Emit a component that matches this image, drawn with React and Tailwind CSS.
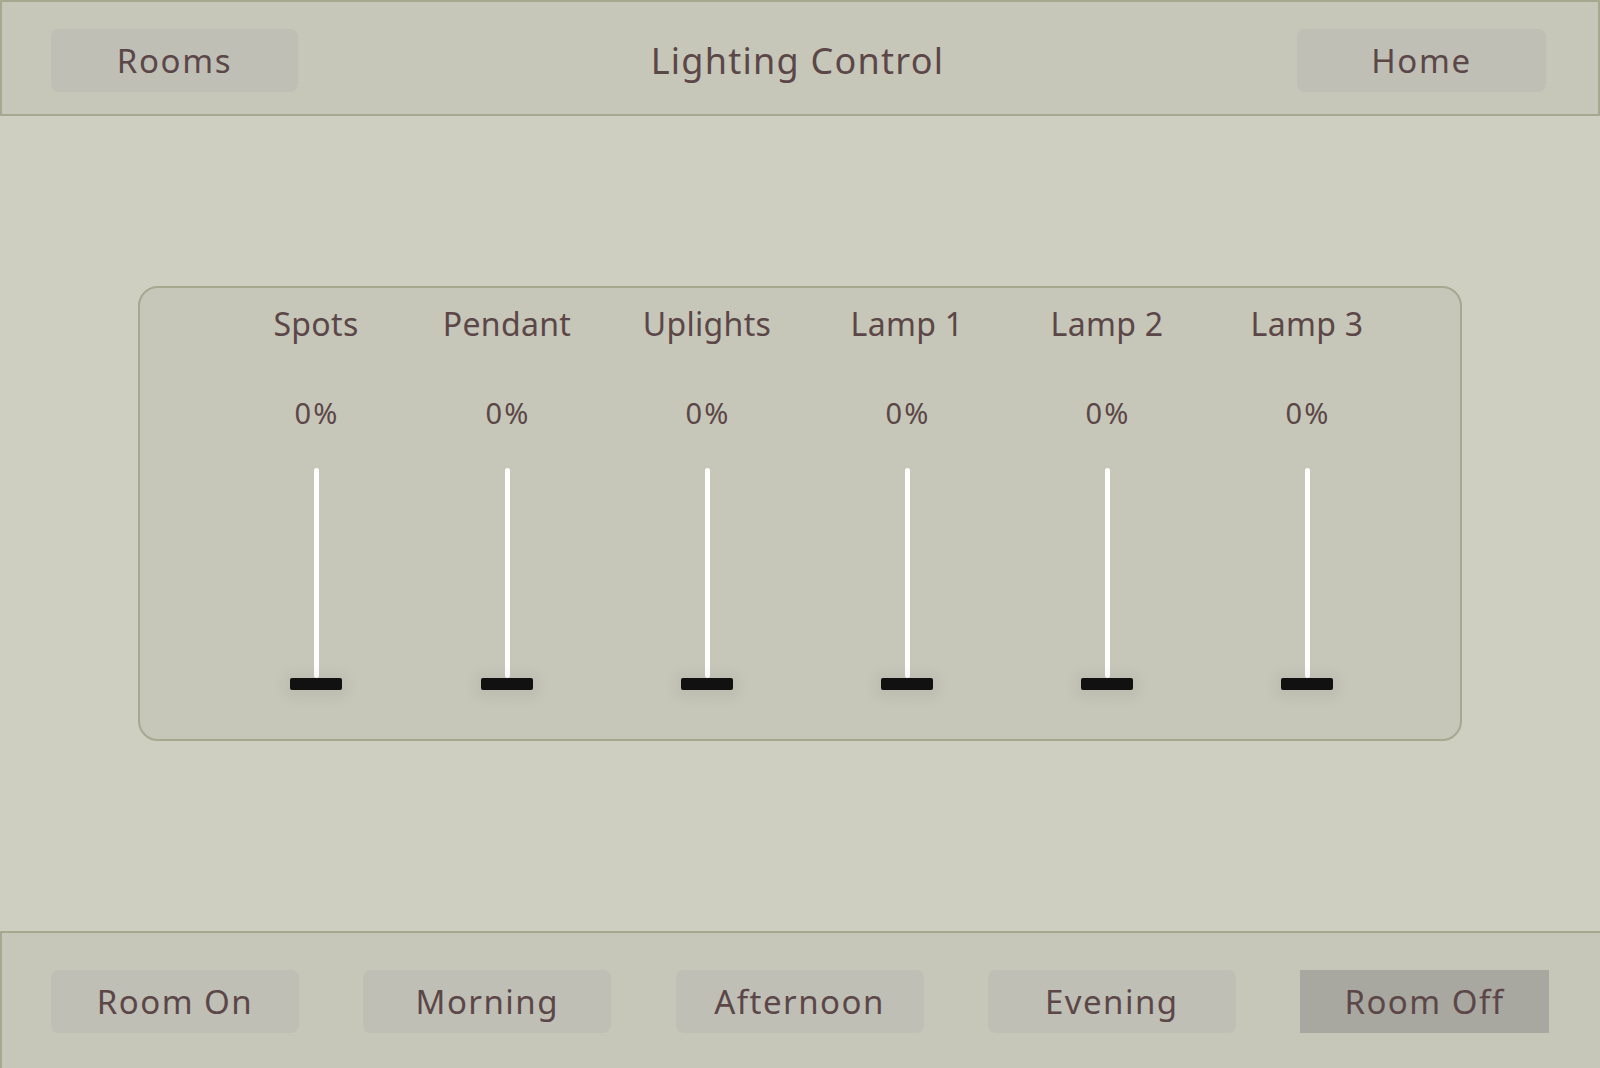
import React from "react";

const channels = [
  { name: "Spots", level: 0, width: "w-[182px]" },
  { name: "Pendant", level: 0, width: "w-[200px]" },
  { name: "Uplights", level: 0, width: "w-[200px]" },
  { name: "Lamp 1", level: 0, width: "w-[200px]" },
  { name: "Lamp 2", level: 0, width: "w-[200px]" },
  { name: "Lamp 3", level: 0, width: "w-[200px]" },
];

const scenes = ["Room On", "Morning", "Afternoon", "Evening", "Room Off"];

function Fader({ name, level, width }) {
  return (
    <div className={`${width} flex flex-col items-center`}>
      <div className="text-[32px] leading-[38px] tracking-[0.01em]">{name}</div>
      <div className="mt-[53px] pl-[2px] text-[29px] leading-[34px] tracking-[0.07em]">{level}%</div>
      <div className="mt-[38px] flex flex-col items-center">
        <div className="h-[210px] w-[5px] rounded-full bg-white" />
        <div className="h-[12px] w-[52px] rounded-[2px] bg-[#111] shadow-[0_2px_14px_6px_rgba(0,0,0,0.05)]" />
      </div>
    </div>
  );
}

export default function App() {
  return (
    <div
      className="flex h-[1068px] w-[1600px] flex-col overflow-hidden bg-[#cecfc1] text-[#5c4748]"
      style={{ fontFamily: '"Noto Sans", sans-serif' }}
    >
      {/* Header */}
      <header className="flex h-[116px] shrink-0 items-start justify-between border-2 border-[#a6a88f] bg-[#c6c6b9] pl-[49px] pr-[52px] pt-[27px]">
        <button className="h-[63px] w-[247px] rounded-lg bg-[#bfbfb6] text-[33px] tracking-[0.05em]">Rooms</button>
        <h1 className="text-[36px] leading-[63px] tracking-[0.035em]">Lighting Control</h1>
        <button className="h-[63px] w-[249px] rounded-lg bg-[#bfbfb6] text-[33px] tracking-[0.05em]">Home</button>
      </header>

      {/* Faders */}
      <main className="flex-1 pt-[170px]">
        <div className="mx-[138px] flex h-[455px] rounded-[20px] border-2 border-[#a6a88f] bg-[#c6c6b9] pl-[85px] pt-[17px]">
          {channels.map((c) => (
            <Fader key={c.name} {...c} />
          ))}
        </div>
      </main>

      {/* Scenes */}
      <footer className="flex h-[137px] shrink-0 items-start justify-between border-l-2 border-t-2 border-[#a6a88f] bg-[#c6c6b9] pl-[49px] pr-[51px] pt-[37px]">
        {scenes.map((s) =>
          s === "Room Off" ? (
            <button key={s} className="h-[63px] w-[249px] bg-[#a8a8a0] text-[33px] tracking-[0.045em]">
              {s}
            </button>
          ) : (
            <button key={s} className="h-[63px] w-[248px] rounded-lg bg-[#bfbfb6] text-[33px] tracking-[0.045em]">
              {s}
            </button>
          )
        )}
      </footer>
    </div>
  );
}
